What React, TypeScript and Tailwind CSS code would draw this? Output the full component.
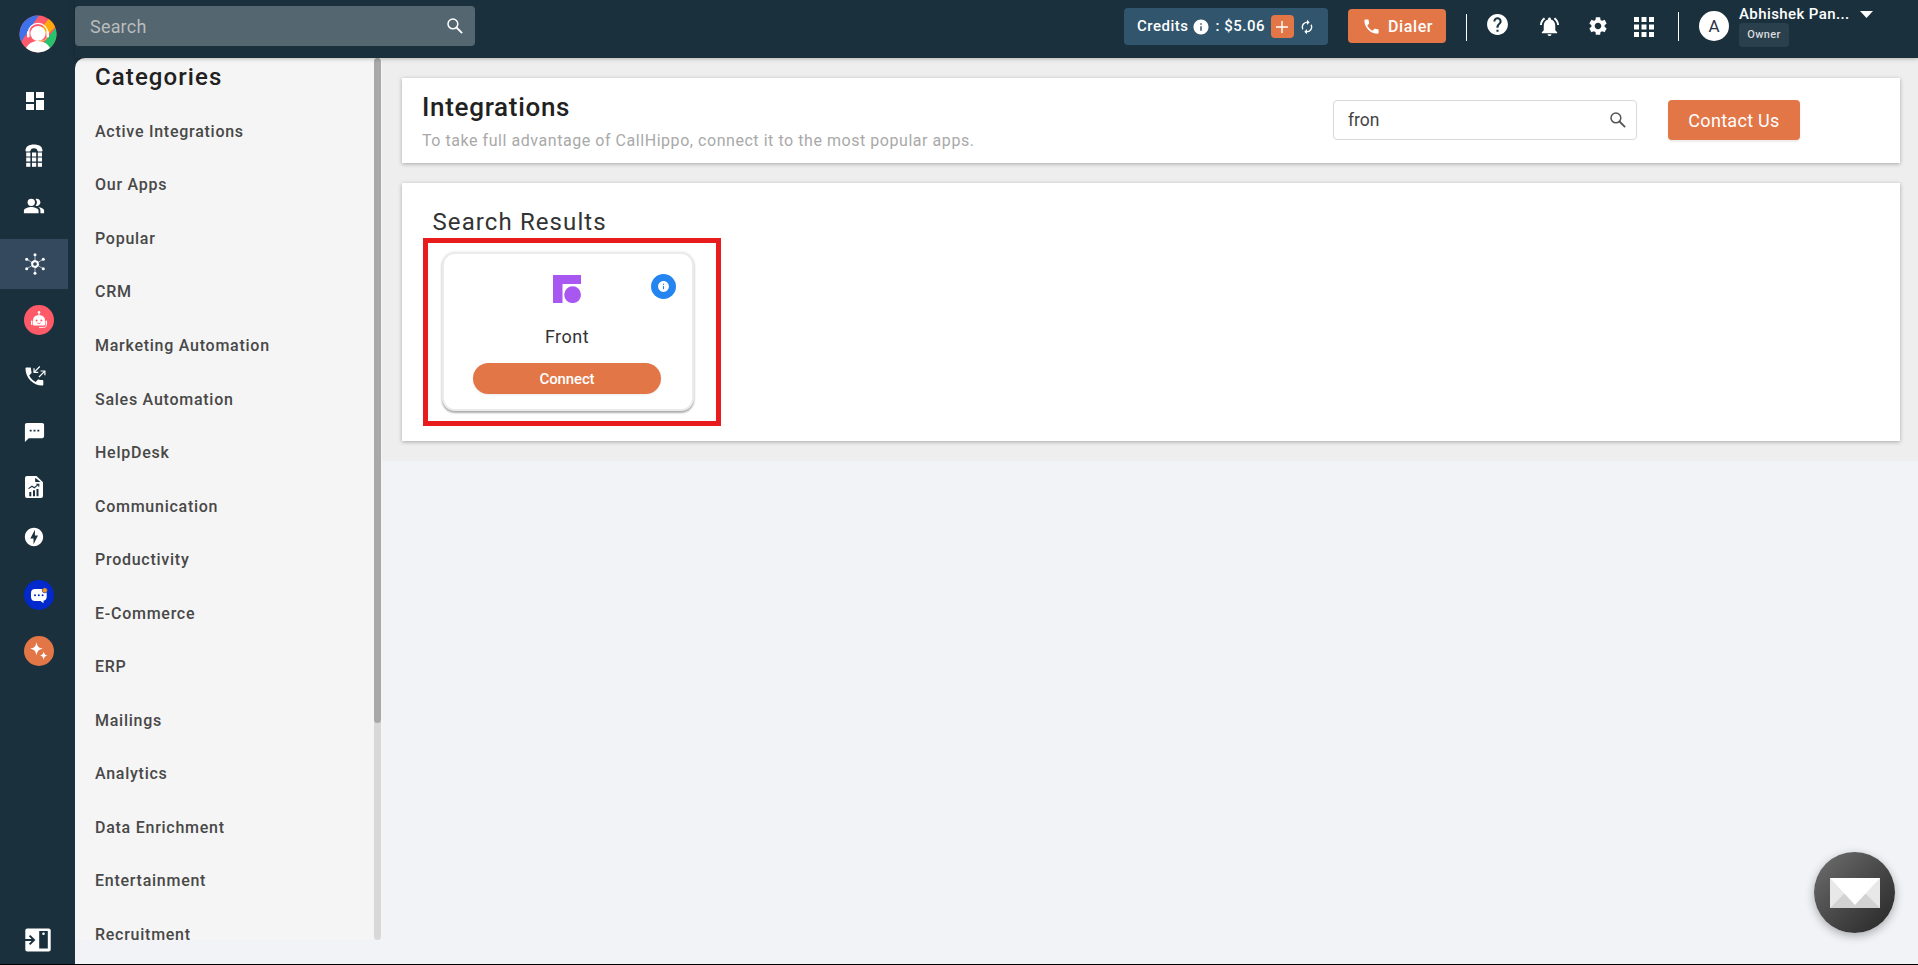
import type { ReactNode } from "react";
import {
  MdApps,
  MdAutorenew,
  MdDashboard,
  MdHelp,
  MdInfo,
  MdNotificationsActive,
  MdOfflineBolt,
  MdPeopleAlt,
  MdPhone,
  MdSettings,
  MdSms,
} from "react-icons/md";

const categories = [
  "Active Integrations",
  "Our Apps",
  "Popular",
  "CRM",
  "Marketing Automation",
  "Sales Automation",
  "HelpDesk",
  "Communication",
  "Productivity",
  "E-Commerce",
  "ERP",
  "Mailings",
  "Analytics",
  "Data Enrichment",
  "Entertainment",
  "Recruitment",
];

function BrandLogo() {
  return (
    <svg width="38" height="38" viewBox="0 0 38 38">
      <defs>
        <clipPath id="brand">
          <circle cx="19" cy="19" r="18.5" />
        </clipPath>
      </defs>
      <g clipPath="url(#brand)">
        <rect width="38" height="38" fill="#ff5a6b" />
        <path d="M0 0h20L2 27H0z" fill="#3f72ea" />
        <path d="M31 2 37 11 28 20 22 14z" fill="#ffa90a" />
        <path d="M38 11 20 34l8 5h10z" fill="#27c26c" />
        <path d="M7 33c3-5 7-7 12-7s9 2 12 7l-3 6H10z" fill="#fff" />
      </g>
      <path d="M9.300 21v-3a9.700 9.700 0 0 1 19.400 0v3" fill="none" stroke="#fff" strokeWidth="1.300" />
      <rect x="8" y="16" width="2.500" height="6.500" rx="1.200" fill="#fff" />
      <rect x="27.500" y="16" width="2.500" height="6.500" rx="1.200" fill="#fff" />
      <circle cx="19" cy="18.500" r="7.600" fill="#fff" />
      <path d="M28 22c-1 2.800-3 3.800-5 3.800h-4" fill="none" stroke="#f8c45a" strokeWidth="1" />
    </svg>
  );
}

function SearchIcon({ className }: { className?: string }) {
  return (
    <svg className={className} width="16" height="16" viewBox="0 0 16 16" fill="none" stroke="currentColor">
      <circle cx="5.900" cy="5.900" r="4.900" strokeWidth="1.500" />
      <path d="m9.500 9.500 5.600 5.600" strokeWidth="1.800" />
    </svg>
  );
}

function DialpadIcon() {
  return (
    <svg width="18" height="23" viewBox="0 0 18 23" fill="#fff">
      <path d="M.5 6.600C.5 2.500 4 .5 9 .5s8.500 2 8.500 6.100c0 .7-.4 1-1 1h-2.700c-.8 0-1.200-.3-1.400-1C12 4.900 10.900 4.200 9 4.200S6 4.900 5.600 6.600c-.2.7-.6 1-1.400 1H1.500c-.6 0-1-.3-1-1z" />
      {[8.500, 13.500, 18.800].map((y) =>
        [1.200, 7, 12.800].map((x) => <rect key={`${x}-${y}`} x={x} y={y} width="4.200" height="4" />)
      )}
    </svg>
  );
}

function HubIcon() {
  const nodes = [
    [10, 1.700],
    [18.300, 6.300],
    [18.300, 15.700],
    [10, 20.300],
    [1.700, 15.700],
    [1.700, 6.300],
  ];
  return (
    <svg width="20" height="22" viewBox="0 0 20 22" fill="#fff" stroke="#fff">
      {nodes.map(([x, y]) => (
        <g key={`${x}-${y}`}>
          <line x1={x} y1={y} x2="10" y2="11" strokeWidth=".6" />
          <circle cx={x} cy={y} r="1.500" stroke="none" />
        </g>
      ))}
      <circle cx="10" cy="11" r="3.700" strokeWidth=".8" strokeDasharray="1.900 1.970" />
      <circle cx="10" cy="11" r="2.600" fill="#34495e" strokeWidth="1.500" />
    </svg>
  );
}

function RobotIcon() {
  return (
    <svg width="30" height="30" viewBox="0 0 30 30">
      <circle cx="15" cy="15" r="15" fill="#ff5a68" />
      <path d="M15 7v4" stroke="#fff" strokeWidth="1" />
      <circle cx="15" cy="7.200" r="1.200" fill="#fff" />
      <path d="M9 19.500v-4c0-3.500 2.500-5.300 6-5.300s6 1.800 6 5.300v4c0 .7-.4 1-1 1H10c-.6 0-1-.3-1-1z" fill="#fff" />
      <rect x="7" y="15.500" width="1.400" height="4.500" rx=".7" fill="#fff" />
      <rect x="21.600" y="15.500" width="1.400" height="4.500" rx=".7" fill="#fff" />
      <circle cx="12.600" cy="15.500" r="1" fill="#ff5a68" />
      <circle cx="17.400" cy="15.500" r="1" fill="#ff5a68" />
      <path d="M13.300 17.900c.9.900 2.500.9 3.400 0" fill="none" stroke="#ff5a68" strokeWidth=".8" />
      <path d="M22.300 20c0 1.700-1 2.400-2.800 2.400H15" fill="none" stroke="#fff" strokeWidth=".9" />
    </svg>
  );
}

function CallsIcon() {
  return (
    <svg width="21" height="22" viewBox="0 0 21 22">
      <path
        d="M4.200 10.400c1.400 2.800 3.700 5 6.500 6.500l2-2.200c.3-.3.700-.4 1-.2 1.200.4 2.400.6 3.600.6.600 0 1 .4 1 1v3.500c0 .6-.4 1-1 1C8 20.600.5 13 .5 3.600c0-.6.4-1 1-1H5c.6 0 1 .4 1 1 0 1.300.2 2.500.6 3.600.1.400 0 .8-.3 1z"
        fill="#fff"
      />
      <path d="M14.800 1.500 9 7.300M9 3.200v4.200h4.200M14 12l5.800-5.800M15.600 6h4.300v4.200" fill="none" stroke="#fff" strokeWidth="1.200" />
    </svg>
  );
}

function ReportIcon() {
  return (
    <svg width="18" height="22" viewBox="0 0 18 22">
      <path d="M2 0h9.500L18 6.200V20a2 2 0 0 1-2 2H2a2 2 0 0 1-2-2V2a2 2 0 0 1 2-2z" fill="#fff" />
      <path d="M10.200 1.800V6h5.400z" fill="#1b303d" />
      <path d="M4.300 16h2v4.200h-2zM8 14.300h2v5.900H8zM11.500 13h2v7.200h-2z" fill="#1b303d" />
      <path d="M3.500 12.600 7 10.200l2.300 1.500 4.200-3.300M11.300 8.300h2.500v2.500" fill="none" stroke="#1b303d" strokeWidth="1.100" />
    </svg>
  );
}

function ChatBotIcon() {
  return (
    <svg width="30" height="30" viewBox="0 0 30 30">
      <circle cx="15" cy="15" r="15" fill="#0329cc" />
      <path d="M11 9h8c2.400 0 3.700 1.400 3.700 4v3.500c0 2.400-1.200 4-3.200 4.300v2.400l-3-2.200H11c-2.700 0-4-1.600-4-4.300V13c0-2.600 1.400-4 4-4z" fill="#fff" />
      <circle cx="11" cy="15.200" r="1" fill="#0329cc" />
      <circle cx="14.800" cy="15.200" r="1" fill="#0329cc" />
      <circle cx="18.600" cy="15.200" r="1" fill="#0329cc" />
      <circle cx="20.800" cy="10.300" r="2.600" fill="#f29a1f" stroke="#0329cc" strokeWidth=".6" />
    </svg>
  );
}

function SparkleIcon() {
  return (
    <svg width="30" height="30" viewBox="0 0 30 30">
      <circle cx="15" cy="15" r="15" fill="#e27647" />
      <path
        d="M12.500 6c.8 4.500 2 5.900 6.500 6.700-4.500.8-5.700 2.200-6.500 6.800-.8-4.600-2-6-6.500-6.800 4.500-.8 5.700-2.200 6.500-6.700zM19.700 15.200c.5 2.900 1.300 3.900 4.300 4.400-3 .5-3.800 1.500-4.300 4.500-.5-3-1.300-4-4.300-4.500 3-.5 3.800-1.500 4.300-4.400z"
        fill="#fff"
      />
    </svg>
  );
}

function CollapseIcon() {
  return (
    <svg width="26" height="24" viewBox="0 0 26 24">
      <rect x=".3" y=".5" width="25.400" height="23" rx="2" fill="#fff" />
      <rect x="14.200" y="3" width="8.600" height="17.500" fill="#1b303d" />
      <circle cx="18.500" cy="5.800" r="1.300" fill="#fff" />
      <path d="M0 12h8.500M4.600 7.600 9 12l-4.400 4.400" fill="none" stroke="#1b303d" strokeWidth="2" />
    </svg>
  );
}

function FrontLogo() {
  return (
    <svg width="28" height="28" viewBox="0 0 28 28" fill="#a857f1">
      <path d="M0 0h28v9H9.500v19H0z" />
      <circle cx="19.600" cy="19.700" r="8.400" />
    </svg>
  );
}

type NavItem = { id: string; icon: ReactNode; className: string };

// Round badges sit a little further right than the plain glyphs
const navItems: NavItem[] = [
  { id: "dashboard", icon: <MdDashboard size={24} />, className: "mt-[23px] pl-[23px]" },
  { id: "numbers", icon: <DialpadIcon />, className: "mt-1 pl-[25px]" },
  { id: "users", icon: <MdPeopleAlt size={22} />, className: "mt-px pl-[23px]" },
  { id: "integrations", icon: <HubIcon />, className: "mt-2 bg-[#34495e] pl-[25px]" },
  { id: "voicebot", icon: <RobotIcon />, className: "mt-1.5 pl-6" },
  { id: "calls", icon: <CallsIcon />, className: "mt-1.5 pl-[25px]" },
  { id: "sms", icon: <MdSms size={23} />, className: "mt-1.5 pl-[23px]" },
  { id: "reports", icon: <ReportIcon />, className: "mt-[5px] pl-[25px]" },
  { id: "power", icon: <MdOfflineBolt size={22} />, className: "pl-[23px]" },
  { id: "chat", icon: <ChatBotIcon />, className: "mt-2 pl-6" },
  { id: "ai", icon: <SparkleIcon />, className: "mt-1.5 pl-6" },
];

function Sidebar() {
  return (
    <nav className="flex w-[75px] shrink-0 flex-col bg-[#1b303d] text-white">
      <div className="pl-[18.5px] pt-[15px]">
        <BrandLogo />
      </div>
      {navItems.map((item) => (
        <div key={item.id} className={`flex h-[50px] w-[68px] shrink-0 items-center ${item.className}`}>
          {item.icon}
        </div>
      ))}
      <div className="mt-auto pb-3 pl-[25px]">
        <CollapseIcon />
      </div>
    </nav>
  );
}

function TopBar() {
  return (
    <header className="z-10 flex h-[58px] shrink-0 items-start bg-[#1b303d] text-white shadow-[0_1px_4px_rgba(0,0,0,0.25)]">
      <div className="mt-1.5 flex h-10 w-[400px] items-center justify-between rounded bg-[#54666f] pl-[15px] pr-3">
        <span className="text-[18px] tracking-[0.2px] text-[#b9bcbd]">Search</span>
        <SearchIcon />
      </div>

      <div className="ml-[649px] mt-2 flex h-[37px] w-[204px] items-center rounded bg-[#30556c] pl-[13px] text-[15px] font-medium">
        <span className="tracking-[0.5px]">Credits</span>
        <MdInfo size={18} className="ml-1" />
        <span className="ml-[5px] tracking-[0.5px]">: $5.06</span>
        <span className="ml-1.5 flex h-[23px] w-[23px] items-center justify-center rounded bg-[#e27647]">
          <svg width="12" height="12" viewBox="0 0 12 12">
            <path d="M6 0v12M0 6h12" stroke="#fff" strokeWidth="1.400" />
          </svg>
        </span>
        <MdAutorenew size={16} className="ml-[5.5px]" />
      </div>

      <button className="ml-5 mt-[9px] flex h-[34px] w-[98px] items-center rounded bg-[#e27647] pl-3.5 text-[16px] font-medium tracking-[0.6px]">
        <MdPhone size={19} />
        <span className="ml-[7px] pt-px">Dialer</span>
      </button>

      <div className="ml-5 mt-3.5 h-[27px] w-px bg-white" />
      <MdHelp size={25} className="ml-[18px] mt-3" />
      <MdNotificationsActive size={23} className="ml-7 mt-[15px]" />
      <MdSettings size={22} className="ml-[26px] mt-[15px]" />
      <MdApps size={30} className="ml-[19.500px] mt-[12px]" />
      <div className="ml-[19.500px] mt-3 h-[29px] w-px bg-white" />

      <div className="ml-5 mt-[11px] flex h-[30px] w-[30px] items-center justify-center rounded-full bg-white pt-0.5 text-[17px] text-[#2b3348]">
        A
      </div>
      <div className="ml-2.5 w-[121px] shrink-0">
        <div className="mt-0.5 h-[21px] whitespace-nowrap text-[15px] font-medium leading-6 tracking-[0.4px]">
          Abhishek Pan...
        </div>
        <span className="flex h-6 w-[50px] items-center justify-center rounded bg-[#2a404c] pt-px text-[11px] font-medium tracking-[0.4px] text-[#d8dcdf]">
          Owner
        </span>
      </div>
      <svg className="mt-[11px]" width="13" height="7" viewBox="0 0 13 7">
        <path d="M0 0h13L6.500 7z" fill="#fff" />
      </svg>
    </header>
  );
}

function Categories() {
  return (
    <aside className="flex h-[882px] w-[307px] shrink-0 overflow-hidden rounded-tl-[10px] bg-[#f5f5f5]">
      <div className="flex-1 pl-5">
        <h2 className="h-[47px] pt-px text-[24px] font-medium leading-9 tracking-[1.1px] text-[#212121]">Categories</h2>
        <ul>
          {categories.map((name) => (
            <li
              key={name}
              className="flex h-[53.56px] items-center text-[16px] font-medium tracking-[0.74px] text-[#484848]"
            >
              {name}
            </li>
          ))}
        </ul>
      </div>
      {/* Scroll track */}
      <div className="mr-px w-[7px] rounded-full bg-[#d8d8d8]">
        <div className="h-[665px] rounded-full bg-[#a8a8a8]" />
      </div>
    </aside>
  );
}

function IntegrationCard() {
  return (
    <div className="h-[159px] w-[252px] rounded-[13px] border-2 border-[#ebebeb] bg-white pr-0.5 shadow-[0_2px_2px_rgba(0,0,0,0.3),0_0_3px_rgba(0,0,0,0.1)]">
      <div className="grid grid-cols-[1fr_28px_1fr] pt-[21px]">
        <span />
        <FrontLogo />
        <span className="mr-3.5 -mt-px flex h-[25px] w-[25px] items-center justify-center justify-self-end rounded-full bg-[#2585f0] text-white">
          <MdInfo size={13} />
        </span>
      </div>
      <div className="mt-[21px] text-center text-[18px] leading-[26px] tracking-[0.5px] text-[#333]">Front</div>
      <button className="mx-auto mt-[13px] block h-[31px] w-[188px] rounded-full bg-[#e27647] text-[15px] font-medium leading-[30px] tracking-[-0.15px] text-white shadow-[0_1px_2px_rgba(0,0,0,0.08)]">
        Connect
      </button>
    </div>
  );
}

function MainContent() {
  return (
    <main className="h-[403px] flex-1 bg-[#eee] pl-5 pr-[18px] pt-5">
      <section className="flex h-[85px] items-start bg-white pl-5 shadow-[0_1px_4px_rgba(0,0,0,0.3)]">
        <div className="w-[911px] pt-[11px]">
          <h1 className="text-[26px] font-medium leading-9 tracking-[0.7px] text-[#212121]">Integrations</h1>
          <p className="pt-px text-[16px] leading-[30px] tracking-[0.55px] text-[#a9a9a9]">
            To take full advantage of CallHippo, connect it to the most popular apps.
          </p>
        </div>
        <div className="mt-[22px] flex h-10 w-[304px] items-center justify-between rounded border border-[#d9d9d9] pl-[14px] pr-2.5">
          <span className="text-[17.5px] text-[#444]">fron</span>
          <SearchIcon className="text-[#555]" />
        </div>
        <button className="ml-[31px] mt-[22px] h-10 w-[132px] rounded bg-[#e27647] text-[18px] tracking-[0.3px] text-white shadow-[0_2px_2px_rgba(0,0,0,0.08)]">
          Contact Us
        </button>
      </section>

      <section className="mt-5 h-[258px] bg-white pl-5 pt-5 shadow-[0_1px_4px_rgba(0,0,0,0.3)]">
        <h2 className="h-[35px] pl-[10.5px] pt-px text-[24px] leading-9 tracking-[1.1px] text-[#333]">Search Results</h2>
        <div className="ml-[0.5px] h-[188px] w-[298px] border-[5px] border-[#e81c1c] pl-[14.5px] pt-[9px]">
          <IntegrationCard />
        </div>
      </section>
    </main>
  );
}

function MailButton() {
  return (
    <button className="absolute bottom-[31px] right-[23px] flex h-[81px] w-[81px] items-center justify-center rounded-full bg-linear-to-br from-[#707070] to-[#262626] shadow-[0_3px_10px_rgba(0,0,0,0.3)]">
      <svg width="50" height="30" viewBox="0 0 50 30">
        <rect width="50" height="30" fill="#e8e8e8" />
        <path d="M0 30 14.500 15.500h21L50 30z" fill="#d2d2d2" />
        <path d="M0 0h50L25 27z" fill="#fff" />
      </svg>
    </button>
  );
}

export default function App() {
  return (
    <div className="relative flex h-[965px] w-[1918px] overflow-hidden border-b border-black bg-[#f1f3f7] font-[Roboto,sans-serif]">
      <Sidebar />
      <div className="flex flex-1 flex-col">
        <TopBar />
        <div className="flex flex-1 items-start bg-[linear-gradient(#1b303d_20px,transparent_20px)]">
          <Categories />
          <MainContent />
        </div>
      </div>
      <MailButton />
    </div>
  );
}
